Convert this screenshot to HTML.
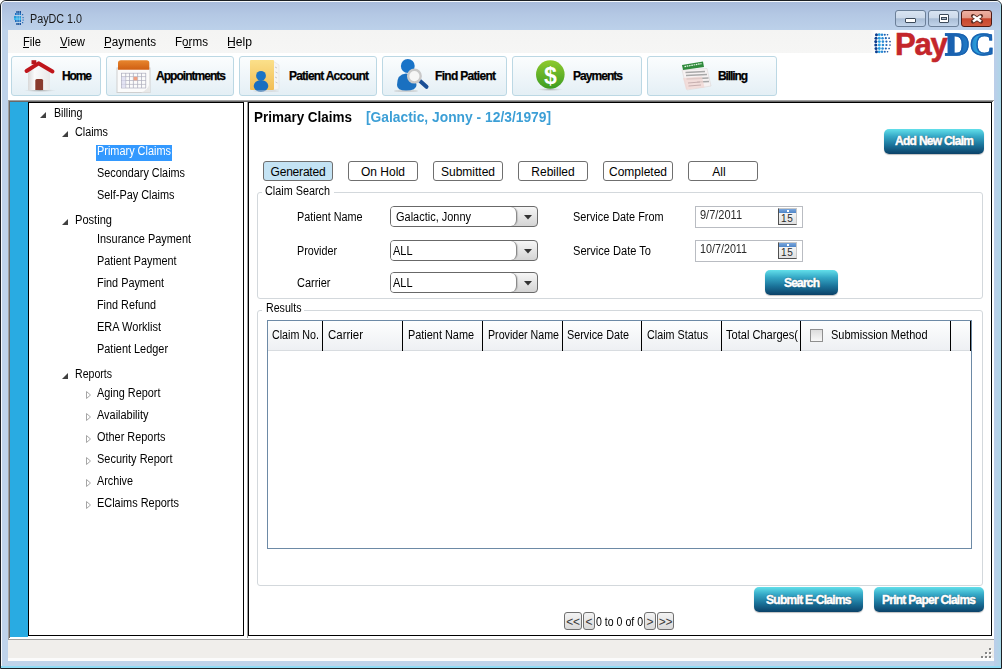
<!DOCTYPE html><html><head><meta charset="utf-8"><style>
html,body{margin:0;padding:0;width:1002px;height:669px;overflow:hidden;background:#fff}
div{box-sizing:border-box}
</style></head><body>
<div style="position:absolute;left:0px;top:0px;width:1002px;height:669px;background:#bfd3ea;border:1px solid #1b1f24;border-radius:6px 6px 0 0;"></div>
<div style="position:absolute;left:1px;top:1px;width:1000px;height:667px;border:1px solid rgba(255,255,255,0.85);border-right-color:#a6d6e6;border-bottom:none;border-radius:5px 5px 0 0;"></div>
<div style="position:absolute;left:994px;top:30px;width:6px;height:636px;background:linear-gradient(90deg,#bccde9,#b0d4e8);"></div>
<div style="position:absolute;left:2px;top:2px;width:998px;height:28px;background:linear-gradient(#a9bcdc,#b4c8e4 45%,#bcd1ea);border-radius:4px 4px 0 0;"></div>
<div style="position:absolute;left:1px;top:666px;width:1000px;height:2px;background:#8fdcf5;"></div>
<div style="position:absolute;left:8px;top:30px;width:986px;height:631px;background:#fff;"></div>
<div style="position:absolute;left:8px;top:30px;width:986px;height:23px;background:linear-gradient(#f4f4f3,#f6f6f5);"></div>
<svg style="position:absolute;left:14px;top:11px" width="10" height="14"><rect x="2" y="0" width="5" height="2" fill="#1a4f9a"/><rect x="1" y="2" width="6" height="2" fill="#1f6fc0"/><rect x="0" y="5" width="7" height="2" fill="#2a9ad8"/><rect x="0" y="7" width="7" height="2" fill="#3ab6ea"/><rect x="1" y="9" width="6" height="2" fill="#1f6fc0"/><rect x="2" y="12" width="5" height="2" fill="#1a4f9a"/><rect x="8" y="3" width="1.2" height="1.2" fill="#2a6fb8"/><rect x="8.5" y="6" width="1.2" height="1.2" fill="#2a6fb8"/><rect x="8.5" y="8.5" width="1.2" height="1.2" fill="#2a6fb8"/><rect x="8" y="11" width="1.2" height="1.2" fill="#2a6fb8"/><rect x="2.6" y="0" width="0.8" height="14" fill="#c0e4f4" opacity="0.7"/><rect x="4.8" y="0" width="0.8" height="14" fill="#c0e4f4" opacity="0.7"/></svg>
<div style="position:absolute;left:30px;top:13px;white-space:nowrap;font:normal 12px/12px 'Liberation Sans',sans-serif;color:#1a1a1a;letter-spacing:0.000px;transform:scaleX(0.8963);transform-origin:0 0;">PayDC 1.0</div>
<div style="position:absolute;left:895px;top:10px;width:31px;height:17px;background:linear-gradient(#d8e4f2 0%,#cddaea 45%,#a9bdd6 52%,#c2d4ea 100%);border:1px solid #6b7f98;border-radius:3px;"></div>
<div style="position:absolute;left:928px;top:10px;width:31px;height:17px;background:linear-gradient(#d8e4f2 0%,#cddaea 45%,#a9bdd6 52%,#c2d4ea 100%);border:1px solid #6b7f98;border-radius:3px;"></div>
<div style="position:absolute;left:961px;top:10px;width:31px;height:17px;background:linear-gradient(#eeb0a2 0%,#e39a88 45%,#c9462c 52%,#d05a3e 100%);border:1px solid #4e1a14;border-radius:3px;"></div>
<div style="position:absolute;left:905px;top:18px;width:11px;height:5px;background:#fff;border:1px solid #3c4a5a;border-radius:1px;"></div>
<div style="position:absolute;left:939px;top:14px;width:10px;height:9px;background:#fff;border:1px solid #3c4a5a;border-radius:1px;"></div>
<div style="position:absolute;left:941px;top:17px;width:6px;height:3px;background:#aab4c0;border:1px solid #3c4a5a;"></div>
<svg style="position:absolute;left:969px;top:12px" width="16" height="13"><path d="M4 4 L12 9.5 M12 4 L4 9.5" stroke="#5a2a20" stroke-width="4" stroke-linecap="round"/><path d="M4 4 L12 9.5 M12 4 L4 9.5" stroke="#fff" stroke-width="2.6"/></svg>
<div style="position:absolute;left:23px;top:36px;white-space:nowrap;font:normal 12px/12px 'Liberation Sans',sans-serif;color:#000;letter-spacing:0.000px;transform:scaleX(0.9305);transform-origin:0 0;">File</div>
<div style="position:absolute;left:23px;top:47px;width:6px;height:1px;background:#000;"></div>
<div style="position:absolute;left:60px;top:36px;white-space:nowrap;font:normal 12px/12px 'Liberation Sans',sans-serif;color:#000;letter-spacing:0.000px;transform:scaleX(0.9691);transform-origin:0 0;">View</div>
<div style="position:absolute;left:60px;top:47px;width:7px;height:1px;background:#000;"></div>
<div style="position:absolute;left:104px;top:36px;white-space:nowrap;font:normal 12px/12px 'Liberation Sans',sans-serif;color:#000;letter-spacing:0.000px;transform:scaleX(0.9748);transform-origin:0 0;">Payments</div>
<div style="position:absolute;left:104px;top:47px;width:7px;height:1px;background:#000;"></div>
<div style="position:absolute;left:175px;top:36px;white-space:nowrap;font:normal 12px/12px 'Liberation Sans',sans-serif;color:#000;letter-spacing:0.000px;transform:scaleX(0.9706);transform-origin:0 0;">Forms</div>
<div style="position:absolute;left:184px;top:47px;width:7px;height:1px;background:#000;"></div>
<div style="position:absolute;left:227px;top:36px;white-space:nowrap;font:normal 12px/12px 'Liberation Sans',sans-serif;color:#000;letter-spacing:0.000px;transform:scaleX(1.0127);transform-origin:0 0;">Help</div>
<div style="position:absolute;left:228px;top:47px;width:7px;height:1px;background:#000;"></div>
<div style="position:absolute;left:870px;top:30px;width:124px;height:24px;background:linear-gradient(90deg,rgba(255,255,255,0),#fff 6px);"></div>
<svg style="position:absolute;left:870px;top:30px" width="22" height="26" viewBox="0 0 22 26"><circle cx="6.46" cy="4.70" r="1.50" fill="#0c3d8e"/><circle cx="9.23" cy="4.70" r="1.40" fill="#2aa2e4"/><circle cx="12.00" cy="4.70" r="1.26" fill="#2b8ad4"/><circle cx="14.77" cy="4.70" r="1.06" fill="#1e64b6"/><circle cx="17.54" cy="4.70" r="0.82" fill="#1a4f9a"/><circle cx="6.04" cy="8.20" r="1.53" fill="#0c3d8e"/><circle cx="9.31" cy="8.20" r="1.43" fill="#2aa2e4"/><circle cx="12.57" cy="8.20" r="1.28" fill="#2b8ad4"/><circle cx="15.84" cy="8.20" r="1.09" fill="#1e64b6"/><circle cx="19.10" cy="8.20" r="0.84" fill="#1a4f9a"/><circle cx="5.80" cy="11.60" r="1.55" fill="#0c3d8e"/><circle cx="9.35" cy="11.60" r="1.45" fill="#2aa2e4"/><circle cx="12.90" cy="11.60" r="1.30" fill="#2b8ad4"/><circle cx="16.45" cy="11.60" r="1.10" fill="#1e64b6"/><circle cx="20.00" cy="11.60" r="0.85" fill="#1a4f9a"/><circle cx="5.80" cy="15.00" r="1.55" fill="#0c3d8e"/><circle cx="9.35" cy="15.00" r="1.45" fill="#2aa2e4"/><circle cx="12.90" cy="15.00" r="1.30" fill="#2b8ad4"/><circle cx="16.45" cy="15.00" r="1.10" fill="#1e64b6"/><circle cx="20.00" cy="15.00" r="0.85" fill="#1a4f9a"/><circle cx="6.04" cy="18.50" r="1.53" fill="#0c3d8e"/><circle cx="9.31" cy="18.50" r="1.43" fill="#2aa2e4"/><circle cx="12.57" cy="18.50" r="1.28" fill="#2b8ad4"/><circle cx="15.84" cy="18.50" r="1.09" fill="#1e64b6"/><circle cx="19.10" cy="18.50" r="0.84" fill="#1a4f9a"/><circle cx="6.46" cy="21.80" r="1.50" fill="#0c3d8e"/><circle cx="9.23" cy="21.80" r="1.40" fill="#2aa2e4"/><circle cx="12.00" cy="21.80" r="1.26" fill="#2b8ad4"/><circle cx="14.77" cy="21.80" r="1.06" fill="#1e64b6"/><circle cx="17.54" cy="21.80" r="0.82" fill="#1a4f9a"/></svg>
<div style="position:absolute;left:895px;top:28px;font:bold 31px/34px 'Liberation Sans',sans-serif;color:#c4262b;-webkit-text-stroke:0.6px #c4262b;letter-spacing:-1.2px">Pay</div>
<div style="position:absolute;left:945px;top:28px;font:bold 31px/34px 'Liberation Serif',serif;transform:scaleX(1.1);transform-origin:0 0;background:linear-gradient(90deg,#1858a8,#1f78c4 45%,#2aa0dc 65%,#1a5cb0);-webkit-background-clip:text;background-clip:text;-webkit-text-fill-color:transparent;-webkit-text-stroke:1.3px #1a62b0;">DC</div>
<div style="position:absolute;left:11px;top:56px;width:90px;height:40px;background:linear-gradient(#fbfdfe,#e4eff5);border:1px solid #bcd8e4;border-radius:3px;"></div>
<div style="position:absolute;left:62px;top:70px;white-space:nowrap;font:bold 12px/12px 'Liberation Sans',sans-serif;color:#000;letter-spacing:-1.115px;-webkit-text-stroke:0.25px #000;">Home</div>
<div style="position:absolute;left:106px;top:56px;width:128px;height:40px;background:linear-gradient(#fbfdfe,#e4eff5);border:1px solid #bcd8e4;border-radius:3px;"></div>
<div style="position:absolute;left:156px;top:70px;white-space:nowrap;font:bold 12px/12px 'Liberation Sans',sans-serif;color:#000;letter-spacing:-0.969px;-webkit-text-stroke:0.25px #000;">Appointments</div>
<div style="position:absolute;left:239px;top:56px;width:138px;height:40px;background:linear-gradient(#fbfdfe,#e4eff5);border:1px solid #bcd8e4;border-radius:3px;"></div>
<div style="position:absolute;left:289px;top:70px;white-space:nowrap;font:bold 12px/12px 'Liberation Sans',sans-serif;color:#000;letter-spacing:-0.778px;-webkit-text-stroke:0.25px #000;">Patient Account</div>
<div style="position:absolute;left:382px;top:56px;width:125px;height:40px;background:linear-gradient(#fbfdfe,#e4eff5);border:1px solid #bcd8e4;border-radius:3px;"></div>
<div style="position:absolute;left:435px;top:70px;white-space:nowrap;font:bold 12px/12px 'Liberation Sans',sans-serif;color:#000;letter-spacing:-0.695px;-webkit-text-stroke:0.25px #000;">Find Patient</div>
<div style="position:absolute;left:512px;top:56px;width:130px;height:40px;background:linear-gradient(#fbfdfe,#e4eff5);border:1px solid #bcd8e4;border-radius:3px;"></div>
<div style="position:absolute;left:573px;top:70px;white-space:nowrap;font:bold 12px/12px 'Liberation Sans',sans-serif;color:#000;letter-spacing:-0.955px;-webkit-text-stroke:0.25px #000;">Payments</div>
<div style="position:absolute;left:647px;top:56px;width:130px;height:40px;background:linear-gradient(#fbfdfe,#e4eff5);border:1px solid #bcd8e4;border-radius:3px;"></div>
<div style="position:absolute;left:718px;top:70px;white-space:nowrap;font:bold 12px/12px 'Liberation Sans',sans-serif;color:#000;letter-spacing:-1.107px;-webkit-text-stroke:0.25px #000;">Billing</div>
<svg style="position:absolute;left:20px;top:56px" width="40" height="40" viewBox="0 0 40 40"><defs><linearGradient id="hw" x1="0" x2="1"><stop offset="0" stop-color="#d8d8d8"/><stop offset="0.3" stop-color="#fbfbfb"/><stop offset="1" stop-color="#e9e9e9"/></linearGradient>
<radialGradient id="hs"><stop offset="0" stop-color="#9a9a9a" stop-opacity="0.8"/><stop offset="1" stop-color="#bbb" stop-opacity="0"/></radialGradient></defs>
<ellipse cx="20" cy="34.5" rx="16" ry="1.6" fill="url(#hs)"/>
<path d="M8 14 L18.5 8 L30 14 L30 34 L8 34 Z" fill="url(#hw)"/>
<path d="M15.3 34 L15.3 24.5 Q15.3 23 16.8 23 L21.6 23 Q23.1 23 23.1 24.5 L23.1 34 Z" fill="#8a3a2c"/>
<rect x="11.5" y="4.2" width="4.8" height="4" fill="#b5161b"/>
<path d="M6.5 15 L18.5 7.3 L32.5 15.5" fill="none" stroke="#bf161c" stroke-width="3.9" stroke-linecap="round" stroke-linejoin="round"/></svg>
<svg style="position:absolute;left:114px;top:56px" width="40" height="40" viewBox="0 0 40 40"><defs><linearGradient id="co" x1="0" y1="0" x2="0" y2="1"><stop offset="0" stop-color="#e8862e"/><stop offset="1" stop-color="#cf5e12"/></linearGradient></defs>
<rect x="3" y="12" width="33" height="24.5" fill="#fbfbfb" stroke="#cfcfcf" stroke-width="1"/>
<path d="M4 13.8 L4 7 Q4 4.2 7 4.2 L32.5 4.2 Q35.3 4.2 35.3 7 L35.3 13.8 Z" fill="url(#co)"/><line x1="7.5" y1="17" x2="7.5" y2="32" stroke="#a8a8b8" stroke-width="0.7"/><line x1="11.7" y1="17" x2="11.7" y2="32" stroke="#a8a8b8" stroke-width="0.7"/><line x1="15.5" y1="17" x2="15.5" y2="32" stroke="#a8a8b8" stroke-width="0.7"/><line x1="19.4" y1="17" x2="19.4" y2="32" stroke="#a8a8b8" stroke-width="0.7"/><line x1="23.6" y1="17" x2="23.6" y2="32" stroke="#a8a8b8" stroke-width="0.7"/><line x1="27.5" y1="17" x2="27.5" y2="32" stroke="#a8a8b8" stroke-width="0.7"/><line x1="31.7" y1="17" x2="31.7" y2="32" stroke="#a8a8b8" stroke-width="0.7"/><line x1="7" y1="17.3" x2="32" y2="17.3" stroke="#b0b0c0" stroke-width="0.7"/><line x1="7" y1="20.6" x2="32" y2="20.6" stroke="#b0b0c0" stroke-width="0.7"/><line x1="7" y1="24.5" x2="32" y2="24.5" stroke="#b0b0c0" stroke-width="0.7"/><line x1="7" y1="28.4" x2="32" y2="28.4" stroke="#b0b0c0" stroke-width="0.7"/><line x1="7" y1="32" x2="32" y2="32" stroke="#b0b0c0" stroke-width="0.7"/><rect x="19.6" y="20.8" width="3.8" height="3.5" fill="#f0a080"/><rect x="7.8" y="20.8" width="3.7" height="11" fill="#d8d8f0" opacity="0.7"/><path d="M36 27 L36 36.5 L27 36.5 Q33 35 36 27 Z" fill="#e8e8e8"/></svg>
<svg style="position:absolute;left:244px;top:56px" width="40" height="40" viewBox="0 0 40 40"><defs><linearGradient id="fy" x1="0" y1="0" x2="0" y2="1"><stop offset="0" stop-color="#fbe08a"/><stop offset="1" stop-color="#f2bd55"/></linearGradient></defs>
<path d="M29 5 L35 9 L35 33 L29 34 Z" fill="#f4f4f4" stroke="#e0e0e0" stroke-width="0.6"/>
<rect x="6" y="4" width="24" height="30" rx="1" fill="url(#fy)"/>
<ellipse cx="17" cy="30" rx="7.3" ry="6" fill="#1a6ec0"/>
<circle cx="17" cy="19.8" r="4.9" fill="#1a73c6"/>
<path d="M31 11 L33 12 M31.5 16 L33.5 17 M31 21 L33 22 M31.5 26 L33.5 27" stroke="#c8c8c8" stroke-width="1"/>
<ellipse cx="22" cy="35" rx="13" ry="1" fill="#ccc" opacity="0.5"/></svg>
<svg style="position:absolute;left:392px;top:54px" width="40" height="40" viewBox="0 0 40 40"><ellipse cx="14" cy="37" rx="12" ry="1" fill="#bbb" opacity="0.6"/>
<circle cx="15.8" cy="12" r="6.9" fill="#1a74c8"/>
<path d="M5 31 Q5 20 14 19.5 Q24 20 24.5 31 Q24.5 36.5 14 36.5 Q5 36.5 5 31 Z" fill="#1a70c0"/>
<line x1="27.5" y1="26.5" x2="34.5" y2="32.8" stroke="#1b4f96" stroke-width="4" stroke-linecap="round"/>
<circle cx="22.4" cy="22.1" r="6.3" fill="#f6f6f6" stroke="#c9c9c9" stroke-width="2.4"/></svg>
<svg style="position:absolute;left:530px;top:56px" width="40" height="40" viewBox="0 0 40 40"><defs><linearGradient id="pg" x1="0" y1="0" x2="0" y2="1"><stop offset="0" stop-color="#8fca2e"/><stop offset="1" stop-color="#3c9c22"/></linearGradient>
<radialGradient id="ps"><stop offset="0" stop-color="#888" stop-opacity="0.6"/><stop offset="1" stop-color="#aaa" stop-opacity="0"/></radialGradient></defs>
<ellipse cx="20" cy="33.5" rx="13" ry="1.6" fill="url(#ps)"/>
<circle cx="20.3" cy="18.5" r="14.3" fill="url(#pg)"/>
<text x="20.3" y="27.5" text-anchor="middle" font-family="Liberation Sans" font-weight="bold" font-size="23" fill="#fff">$</text></svg>
<svg style="position:absolute;left:676px;top:56px" width="40" height="40" viewBox="0 0 40 40"><path d="M6 14 L31 12.5 L35 30 L11 34 Z" fill="#f6f2f2" stroke="#dcd6d6" stroke-width="0.6"/>
<path d="M9.5 16.5 L29 15.5 M10 19.5 L31 18.5 M10.5 23 L32.5 22 M21 26 L33 25.5" stroke="#a9a9a9" stroke-width="1.3"/>
<path d="M7 22 L26 20.5 L28.5 31.5 L10 33.5 Z" fill="#f0d6d2" opacity="0.75"/>
<path d="M12 27 L24 26 M12.5 30 L25 29" stroke="#c8b0b0" stroke-width="1"/>
<path d="M6 9 L27 5.4 L28 11 L7 14 Z" fill="#2f8a3c"/>
<path d="M8.5 10.6 L25.5 7.6" stroke="#e8f8e8" stroke-width="1.2" stroke-dasharray="1.6 0.7"/></svg>
<div style="position:absolute;left:8px;top:100px;width:986px;height:1px;background:#a0a0a0;"></div>
<div style="position:absolute;left:9px;top:101px;width:984px;height:1px;background:#696969;"></div>
<div style="position:absolute;left:10px;top:102px;width:18px;height:535px;background:#29abe2;"></div>
<div style="position:absolute;left:8px;top:100px;width:1px;height:539px;background:#a0a0a0;"></div>
<div style="position:absolute;left:9px;top:101px;width:1px;height:537px;background:#696969;"></div>
<div style="position:absolute;left:28px;top:102px;width:216px;height:534px;background:#fff;border:1px solid #000;"></div>
<div style="position:absolute;left:248px;top:102px;width:744px;height:534px;background:#fff;border:1px solid #000;"></div>
<div style="position:absolute;left:247px;top:102px;width:1px;height:536px;background:#a0a0a0;"></div>
<div style="position:absolute;left:8px;top:639px;width:986px;height:1px;background:#a0a0a0;"></div>
<div style="position:absolute;left:8px;top:640px;width:986px;height:18px;background:#f0eeeb;"></div>
<div style="position:absolute;left:8px;top:658px;width:986px;height:3px;background:#fbfbfb;"></div>
<div style="position:absolute;left:990px;top:649px;width:2px;height:2px;background:#fff;"></div>
<div style="position:absolute;left:989px;top:648px;width:2px;height:2px;background:#858585;"></div>
<div style="position:absolute;left:986px;top:653px;width:2px;height:2px;background:#fff;"></div>
<div style="position:absolute;left:985px;top:652px;width:2px;height:2px;background:#858585;"></div>
<div style="position:absolute;left:990px;top:653px;width:2px;height:2px;background:#fff;"></div>
<div style="position:absolute;left:989px;top:652px;width:2px;height:2px;background:#858585;"></div>
<div style="position:absolute;left:982px;top:657px;width:2px;height:2px;background:#fff;"></div>
<div style="position:absolute;left:981px;top:656px;width:2px;height:2px;background:#858585;"></div>
<div style="position:absolute;left:986px;top:657px;width:2px;height:2px;background:#fff;"></div>
<div style="position:absolute;left:985px;top:656px;width:2px;height:2px;background:#858585;"></div>
<div style="position:absolute;left:990px;top:657px;width:2px;height:2px;background:#fff;"></div>
<div style="position:absolute;left:989px;top:656px;width:2px;height:2px;background:#858585;"></div>
<svg style="position:absolute;left:39px;top:112px" width="8" height="7"><path d="M7 0 L7 6 L1 6 Z" fill="#404040"/></svg>
<div style="position:absolute;left:54px;top:107px;white-space:nowrap;font:normal 12px/12px 'Liberation Sans',sans-serif;color:#000;letter-spacing:0.000px;transform:scaleX(0.8898);transform-origin:0 0;">Billing</div>
<svg style="position:absolute;left:61px;top:131px" width="8" height="7"><path d="M7 0 L7 6 L1 6 Z" fill="#404040"/></svg>
<div style="position:absolute;left:75px;top:126px;white-space:nowrap;font:normal 12px/12px 'Liberation Sans',sans-serif;color:#000;letter-spacing:0.000px;transform:scaleX(0.8995);transform-origin:0 0;">Claims</div>
<div style="position:absolute;left:96px;top:145px;width:76px;height:16px;background:#3399ff;"></div>
<div style="position:absolute;left:97px;top:145px;white-space:nowrap;font:normal 12px/12px 'Liberation Sans',sans-serif;color:#fff;letter-spacing:0.000px;transform:scaleX(0.9095);transform-origin:0 0;">Primary Claims</div>
<div style="position:absolute;left:97px;top:167px;white-space:nowrap;font:normal 12px/12px 'Liberation Sans',sans-serif;color:#000;letter-spacing:0.000px;transform:scaleX(0.9037);transform-origin:0 0;">Secondary Claims</div>
<div style="position:absolute;left:97px;top:189px;white-space:nowrap;font:normal 12px/12px 'Liberation Sans',sans-serif;color:#000;letter-spacing:0.000px;transform:scaleX(0.9079);transform-origin:0 0;">Self-Pay Claims</div>
<svg style="position:absolute;left:61px;top:219px" width="8" height="7"><path d="M7 0 L7 6 L1 6 Z" fill="#404040"/></svg>
<div style="position:absolute;left:75px;top:214px;white-space:nowrap;font:normal 12px/12px 'Liberation Sans',sans-serif;color:#000;letter-spacing:0.000px;transform:scaleX(0.9246);transform-origin:0 0;">Posting</div>
<div style="position:absolute;left:97px;top:233px;white-space:nowrap;font:normal 12px/12px 'Liberation Sans',sans-serif;color:#000;letter-spacing:0.000px;transform:scaleX(0.9094);transform-origin:0 0;">Insurance Payment</div>
<div style="position:absolute;left:97px;top:255px;white-space:nowrap;font:normal 12px/12px 'Liberation Sans',sans-serif;color:#000;letter-spacing:0.000px;transform:scaleX(0.9032);transform-origin:0 0;">Patient Payment</div>
<div style="position:absolute;left:97px;top:277px;white-space:nowrap;font:normal 12px/12px 'Liberation Sans',sans-serif;color:#000;letter-spacing:0.000px;transform:scaleX(0.9052);transform-origin:0 0;">Find Payment</div>
<div style="position:absolute;left:97px;top:299px;white-space:nowrap;font:normal 12px/12px 'Liberation Sans',sans-serif;color:#000;letter-spacing:0.000px;transform:scaleX(0.9027);transform-origin:0 0;">Find Refund</div>
<div style="position:absolute;left:97px;top:321px;white-space:nowrap;font:normal 12px/12px 'Liberation Sans',sans-serif;color:#000;letter-spacing:0.000px;transform:scaleX(0.9169);transform-origin:0 0;">ERA Worklist</div>
<div style="position:absolute;left:97px;top:343px;white-space:nowrap;font:normal 12px/12px 'Liberation Sans',sans-serif;color:#000;letter-spacing:0.000px;transform:scaleX(0.9099);transform-origin:0 0;">Patient Ledger</div>
<svg style="position:absolute;left:61px;top:373px" width="8" height="7"><path d="M7 0 L7 6 L1 6 Z" fill="#404040"/></svg>
<div style="position:absolute;left:75px;top:368px;white-space:nowrap;font:normal 12px/12px 'Liberation Sans',sans-serif;color:#000;letter-spacing:0.000px;transform:scaleX(0.8806);transform-origin:0 0;">Reports</div>
<svg style="position:absolute;left:85px;top:391px" width="8" height="9"><path d="M1.5 0.5 L5.5 4 L1.5 7.5 Z" fill="#fff" stroke="#a6a6a6"/></svg>
<div style="position:absolute;left:97px;top:387px;white-space:nowrap;font:normal 12px/12px 'Liberation Sans',sans-serif;color:#000;letter-spacing:0.000px;transform:scaleX(0.9067);transform-origin:0 0;">Aging Report</div>
<svg style="position:absolute;left:85px;top:413px" width="8" height="9"><path d="M1.5 0.5 L5.5 4 L1.5 7.5 Z" fill="#fff" stroke="#a6a6a6"/></svg>
<div style="position:absolute;left:97px;top:409px;white-space:nowrap;font:normal 12px/12px 'Liberation Sans',sans-serif;color:#000;letter-spacing:0.000px;transform:scaleX(0.9118);transform-origin:0 0;">Availability</div>
<svg style="position:absolute;left:85px;top:435px" width="8" height="9"><path d="M1.5 0.5 L5.5 4 L1.5 7.5 Z" fill="#fff" stroke="#a6a6a6"/></svg>
<div style="position:absolute;left:97px;top:431px;white-space:nowrap;font:normal 12px/12px 'Liberation Sans',sans-serif;color:#000;letter-spacing:0.000px;transform:scaleX(0.9092);transform-origin:0 0;">Other Reports</div>
<svg style="position:absolute;left:85px;top:457px" width="8" height="9"><path d="M1.5 0.5 L5.5 4 L1.5 7.5 Z" fill="#fff" stroke="#a6a6a6"/></svg>
<div style="position:absolute;left:97px;top:453px;white-space:nowrap;font:normal 12px/12px 'Liberation Sans',sans-serif;color:#000;letter-spacing:0.000px;transform:scaleX(0.9131);transform-origin:0 0;">Security Report</div>
<svg style="position:absolute;left:85px;top:479px" width="8" height="9"><path d="M1.5 0.5 L5.5 4 L1.5 7.5 Z" fill="#fff" stroke="#a6a6a6"/></svg>
<div style="position:absolute;left:97px;top:475px;white-space:nowrap;font:normal 12px/12px 'Liberation Sans',sans-serif;color:#000;letter-spacing:0.000px;transform:scaleX(0.8996);transform-origin:0 0;">Archive</div>
<svg style="position:absolute;left:85px;top:501px" width="8" height="9"><path d="M1.5 0.5 L5.5 4 L1.5 7.5 Z" fill="#fff" stroke="#a6a6a6"/></svg>
<div style="position:absolute;left:97px;top:497px;white-space:nowrap;font:normal 12px/12px 'Liberation Sans',sans-serif;color:#000;letter-spacing:0.000px;transform:scaleX(0.9108);transform-origin:0 0;">EClaims Reports</div>
<div style="position:absolute;left:254px;top:110px;white-space:nowrap;font:bold 14px/14px 'Liberation Sans',sans-serif;color:#000;letter-spacing:0.000px;transform:scaleX(0.9612);transform-origin:0 0;">Primary Claims</div>
<div style="position:absolute;left:366px;top:110px;white-space:nowrap;font:bold 14px/14px 'Liberation Sans',sans-serif;color:#3c9fd6;letter-spacing:0.000px;transform:scaleX(0.9870);transform-origin:0 0;">[Galactic, Jonny - 12/3/1979]</div>
<div style="position:absolute;left:884px;top:129px;width:100px;height:25px;background:linear-gradient(#62dfea 0%,#35a8c6 30%,#1a7299 65%,#0b4168 100%);border-radius:5px;box-shadow:0 1px 1px rgba(0,0,0,0.25);"></div>
<div style="position:absolute;left:895px;top:135px;white-space:nowrap;font:bold 12px/12px 'Liberation Sans',sans-serif;color:#fff;letter-spacing:-0.694px;text-shadow:0 0 1px #0a3550,0 0 1px #0a3550;-webkit-text-stroke:0.5px #fff;">Add New Claim</div>
<div style="position:absolute;left:263px;top:161px;width:70px;height:20px;background:#c4e3f4;border:1px solid #6f6f6f;border-radius:3px;"></div>
<div style="position:absolute;left:263px;top:166px;width:70px;text-align:center;font:12px/12px 'Liberation Sans',sans-serif;letter-spacing:-0.2px;color:#000">Generated</div>
<div style="position:absolute;left:348px;top:161px;width:70px;height:20px;background:#fff;border:1px solid #6f6f6f;border-radius:3px;"></div>
<div style="position:absolute;left:348px;top:166px;width:70px;text-align:center;font:12px/12px 'Liberation Sans',sans-serif;letter-spacing:0px;color:#000">On Hold</div>
<div style="position:absolute;left:433px;top:161px;width:70px;height:20px;background:#fff;border:1px solid #6f6f6f;border-radius:3px;"></div>
<div style="position:absolute;left:433px;top:166px;width:70px;text-align:center;font:12px/12px 'Liberation Sans',sans-serif;letter-spacing:0px;color:#000">Submitted</div>
<div style="position:absolute;left:518px;top:161px;width:70px;height:20px;background:#fff;border:1px solid #6f6f6f;border-radius:3px;"></div>
<div style="position:absolute;left:518px;top:166px;width:70px;text-align:center;font:12px/12px 'Liberation Sans',sans-serif;letter-spacing:0px;color:#000">Rebilled</div>
<div style="position:absolute;left:603px;top:161px;width:70px;height:20px;background:#fff;border:1px solid #6f6f6f;border-radius:3px;"></div>
<div style="position:absolute;left:603px;top:166px;width:70px;text-align:center;font:12px/12px 'Liberation Sans',sans-serif;letter-spacing:0px;color:#000">Completed</div>
<div style="position:absolute;left:688px;top:161px;width:70px;height:20px;background:#fff;border:1px solid #6f6f6f;border-radius:3px;"></div>
<div style="position:absolute;left:684px;top:166px;width:70px;text-align:center;font:12px/12px 'Liberation Sans',sans-serif;letter-spacing:0px;color:#000">All</div>
<div style="position:absolute;left:257px;top:192px;width:726px;height:107px;border:1px solid #d3d8dc;border-radius:3px;"></div>
<div style="position:absolute;left:262px;top:186px;width:72px;height:12px;background:#fff;"></div>
<div style="position:absolute;left:265px;top:185px;white-space:nowrap;font:normal 12px/12px 'Liberation Sans',sans-serif;color:#000;letter-spacing:0.000px;transform:scaleX(0.9024);transform-origin:0 0;">Claim Search</div>
<div style="position:absolute;left:257px;top:310px;width:726px;height:276px;border:1px solid #d3d8dc;border-radius:3px;"></div>
<div style="position:absolute;left:262px;top:303px;width:42px;height:12px;background:#fff;"></div>
<div style="position:absolute;left:266px;top:302px;white-space:nowrap;font:normal 12px/12px 'Liberation Sans',sans-serif;color:#000;letter-spacing:0.000px;transform:scaleX(0.8872);transform-origin:0 0;">Results</div>
<div style="position:absolute;left:297px;top:211px;white-space:nowrap;font:normal 12px/12px 'Liberation Sans',sans-serif;color:#000;letter-spacing:0.000px;transform:scaleX(0.9011);transform-origin:0 0;">Patient Name</div>
<div style="position:absolute;left:297px;top:245px;white-space:nowrap;font:normal 12px/12px 'Liberation Sans',sans-serif;color:#000;letter-spacing:0.000px;transform:scaleX(0.8951);transform-origin:0 0;">Provider</div>
<div style="position:absolute;left:297px;top:277px;white-space:nowrap;font:normal 12px/12px 'Liberation Sans',sans-serif;color:#000;letter-spacing:0.000px;transform:scaleX(0.9131);transform-origin:0 0;">Carrier</div>
<div style="position:absolute;left:573px;top:211px;white-space:nowrap;font:normal 12px/12px 'Liberation Sans',sans-serif;color:#000;letter-spacing:0.000px;transform:scaleX(0.9049);transform-origin:0 0;">Service Date From</div>
<div style="position:absolute;left:573px;top:245px;white-space:nowrap;font:normal 12px/12px 'Liberation Sans',sans-serif;color:#000;letter-spacing:0.000px;transform:scaleX(0.9234);transform-origin:0 0;">Service Date To</div>
<div style="position:absolute;left:390px;top:206px;width:148px;height:21px;background:linear-gradient(#f6f6f6,#d4d4d4);border:1px solid #6a6a6a;border-radius:4px;"></div>
<div style="position:absolute;left:391px;top:207px;width:126px;height:19px;background:#fff;border-right:1px solid #8a8a8a;border-radius:3px 6px 6px 3px;box-shadow:1px 0 1px rgba(0,0,0,0.15);"></div>
<svg style="position:absolute;left:524px;top:215px" width="9" height="5"><path d="M0 0 L8 0 L4 4.5 Z" fill="#333"/></svg>
<div style="position:absolute;left:396px;top:211px;white-space:nowrap;font:normal 12px/12px 'Liberation Sans',sans-serif;color:#000;letter-spacing:0.000px;transform:scaleX(0.9145);transform-origin:0 0;">Galactic, Jonny</div>
<div style="position:absolute;left:390px;top:240px;width:148px;height:21px;background:linear-gradient(#f6f6f6,#d4d4d4);border:1px solid #6a6a6a;border-radius:4px;"></div>
<div style="position:absolute;left:391px;top:241px;width:126px;height:19px;background:#fff;border-right:1px solid #8a8a8a;border-radius:3px 6px 6px 3px;box-shadow:1px 0 1px rgba(0,0,0,0.15);"></div>
<svg style="position:absolute;left:524px;top:249px" width="9" height="5"><path d="M0 0 L8 0 L4 4.5 Z" fill="#333"/></svg>
<div style="position:absolute;left:393px;top:245px;white-space:nowrap;font:normal 12px/12px 'Liberation Sans',sans-serif;color:#000;letter-spacing:0.000px;transform:scaleX(0.9136);transform-origin:0 0;">ALL</div>
<div style="position:absolute;left:390px;top:272px;width:148px;height:21px;background:linear-gradient(#f6f6f6,#d4d4d4);border:1px solid #6a6a6a;border-radius:4px;"></div>
<div style="position:absolute;left:391px;top:273px;width:126px;height:19px;background:#fff;border-right:1px solid #8a8a8a;border-radius:3px 6px 6px 3px;box-shadow:1px 0 1px rgba(0,0,0,0.15);"></div>
<svg style="position:absolute;left:524px;top:281px" width="9" height="5"><path d="M0 0 L8 0 L4 4.5 Z" fill="#333"/></svg>
<div style="position:absolute;left:393px;top:277px;white-space:nowrap;font:normal 12px/12px 'Liberation Sans',sans-serif;color:#000;letter-spacing:0.000px;transform:scaleX(0.9136);transform-origin:0 0;">ALL</div>
<div style="position:absolute;left:695px;top:206px;width:108px;height:22px;background:#fff;border:1px solid #b9bcc2;"></div>
<div style="position:absolute;left:700px;top:209px;white-space:nowrap;font:normal 12px/12px 'Liberation Sans',sans-serif;color:#2a2a2a;letter-spacing:0.000px;transform:scaleX(0.9171);transform-origin:0 0;">9/7/2011</div>
<div style="position:absolute;left:778px;top:208px;width:19px;height:17px;background:linear-gradient(#fcfcfc,#e0e0e0);border:1px solid #c8c8c8;border-left:1px solid #505050;border-bottom:1px solid #505050;"></div>
<div style="position:absolute;left:779px;top:209px;width:17px;height:4px;background:linear-gradient(#7aa6dc,#4f86c8);"></div>
<div style="position:absolute;left:787px;top:210px;width:2px;height:2px;background:#fff;"></div>
<div style="position:absolute;left:781px;top:214px;font:normal 10px/10px 'Liberation Sans',sans-serif;color:#2a2a2a;letter-spacing:0.6px">15</div>
<div style="position:absolute;left:695px;top:240px;width:108px;height:22px;background:#fff;border:1px solid #b9bcc2;"></div>
<div style="position:absolute;left:700px;top:243px;white-space:nowrap;font:normal 12px/12px 'Liberation Sans',sans-serif;color:#2a2a2a;letter-spacing:0.000px;transform:scaleX(0.8958);transform-origin:0 0;">10/7/2011</div>
<div style="position:absolute;left:778px;top:242px;width:19px;height:17px;background:linear-gradient(#fcfcfc,#e0e0e0);border:1px solid #c8c8c8;border-left:1px solid #505050;border-bottom:1px solid #505050;"></div>
<div style="position:absolute;left:779px;top:243px;width:17px;height:4px;background:linear-gradient(#7aa6dc,#4f86c8);"></div>
<div style="position:absolute;left:787px;top:244px;width:2px;height:2px;background:#fff;"></div>
<div style="position:absolute;left:781px;top:248px;font:normal 10px/10px 'Liberation Sans',sans-serif;color:#2a2a2a;letter-spacing:0.6px">15</div>
<div style="position:absolute;left:765px;top:270px;width:73px;height:25px;background:linear-gradient(#62dfea 0%,#35a8c6 30%,#1a7299 65%,#0b4168 100%);border-radius:5px;box-shadow:0 1px 1px rgba(0,0,0,0.25);"></div>
<div style="position:absolute;left:784px;top:277px;white-space:nowrap;font:bold 12px/12px 'Liberation Sans',sans-serif;color:#fff;letter-spacing:-0.803px;text-shadow:0 0 1px #0a3550,0 0 1px #0a3550;-webkit-text-stroke:0.5px #fff;">Search</div>
<div style="position:absolute;left:267px;top:320px;width:705px;height:229px;background:#fff;border:1px solid #6d8aa6;"></div>
<div style="position:absolute;left:268px;top:321px;width:703px;height:30px;background:linear-gradient(#fdfefe,#eef0f3);border-bottom:1px solid #d8dce0;"></div>
<div style="position:absolute;left:322px;top:321px;width:1px;height:30px;background:#000;"></div>
<div style="position:absolute;left:402px;top:321px;width:1px;height:30px;background:#000;"></div>
<div style="position:absolute;left:482px;top:321px;width:1px;height:30px;background:#000;"></div>
<div style="position:absolute;left:562px;top:321px;width:1px;height:30px;background:#000;"></div>
<div style="position:absolute;left:641px;top:321px;width:1px;height:30px;background:#000;"></div>
<div style="position:absolute;left:721px;top:321px;width:1px;height:30px;background:#000;"></div>
<div style="position:absolute;left:800px;top:321px;width:1px;height:30px;background:#000;"></div>
<div style="position:absolute;left:950px;top:321px;width:1px;height:30px;background:#000;"></div>
<div style="position:absolute;left:970px;top:321px;width:1px;height:30px;background:#000;"></div>
<div style="position:absolute;left:272px;top:329px;white-space:nowrap;font:normal 12px/12px 'Liberation Sans',sans-serif;color:#000;letter-spacing:0.000px;transform:scaleX(0.8921);transform-origin:0 0;">Claim No.</div>
<div style="position:absolute;left:328px;top:329px;white-space:nowrap;font:normal 12px/12px 'Liberation Sans',sans-serif;color:#000;letter-spacing:0.000px;transform:scaleX(0.9540);transform-origin:0 0;">Carrier</div>
<div style="position:absolute;left:408px;top:329px;white-space:nowrap;font:normal 12px/12px 'Liberation Sans',sans-serif;color:#000;letter-spacing:0.000px;transform:scaleX(0.9080);transform-origin:0 0;">Patient Name</div>
<div style="position:absolute;left:488px;top:329px;white-space:nowrap;font:normal 12px/12px 'Liberation Sans',sans-serif;color:#000;letter-spacing:0.000px;transform:scaleX(0.8872);transform-origin:0 0;">Provider Name</div>
<div style="position:absolute;left:567px;top:329px;white-space:nowrap;font:normal 12px/12px 'Liberation Sans',sans-serif;color:#000;letter-spacing:0.000px;transform:scaleX(0.9026);transform-origin:0 0;">Service Date</div>
<div style="position:absolute;left:647px;top:329px;white-space:nowrap;font:normal 12px/12px 'Liberation Sans',sans-serif;color:#000;letter-spacing:0.000px;transform:scaleX(0.8969);transform-origin:0 0;">Claim Status</div>
<div style="position:absolute;left:726px;top:329px;white-space:nowrap;font:normal 12px/12px 'Liberation Sans',sans-serif;color:#000;letter-spacing:0.000px;transform:scaleX(0.9227);transform-origin:0 0;">Total Charges(</div>
<div style="position:absolute;left:831px;top:329px;white-space:nowrap;font:normal 12px/12px 'Liberation Sans',sans-serif;color:#000;letter-spacing:0.000px;transform:scaleX(0.9158);transform-origin:0 0;">Submission Method</div>
<div style="position:absolute;left:810px;top:329px;width:13px;height:13px;background:linear-gradient(#dcdcdc,#f8f8f8);border:1px solid #8f8f8f;"></div>
<div style="position:absolute;left:754px;top:587px;width:109px;height:25px;background:linear-gradient(#62dfea 0%,#35a8c6 30%,#1a7299 65%,#0b4168 100%);border-radius:5px;box-shadow:0 1px 1px rgba(0,0,0,0.25);"></div>
<div style="position:absolute;left:766px;top:594px;white-space:nowrap;font:bold 12px/12px 'Liberation Sans',sans-serif;color:#fff;letter-spacing:-0.702px;text-shadow:0 0 1px #0a3550,0 0 1px #0a3550;-webkit-text-stroke:0.5px #fff;">Submit E-Claims</div>
<div style="position:absolute;left:874px;top:587px;width:110px;height:25px;background:linear-gradient(#62dfea 0%,#35a8c6 30%,#1a7299 65%,#0b4168 100%);border-radius:5px;box-shadow:0 1px 1px rgba(0,0,0,0.25);"></div>
<div style="position:absolute;left:882px;top:594px;white-space:nowrap;font:bold 12px/12px 'Liberation Sans',sans-serif;color:#fff;letter-spacing:-0.745px;text-shadow:0 0 1px #0a3550,0 0 1px #0a3550;-webkit-text-stroke:0.5px #fff;">Print Paper Claims</div>
<div style="position:absolute;left:564px;top:612px;width:18px;height:18px;background:linear-gradient(#f3f3f3,#dadada);border:1px solid #707070;border-radius:3px;"></div>
<div style="position:absolute;left:564px;top:616px;width:18px;text-align:center;font:12px/12px 'Liberation Sans',sans-serif;color:#3a3a3a;letter-spacing:-0.2px">&lt;&lt;</div>
<div style="position:absolute;left:583px;top:612px;width:12px;height:18px;background:linear-gradient(#f3f3f3,#dadada);border:1px solid #707070;border-radius:3px;"></div>
<div style="position:absolute;left:583px;top:616px;width:12px;text-align:center;font:12px/12px 'Liberation Sans',sans-serif;color:#3a3a3a;letter-spacing:-0.2px">&lt;</div>
<div style="position:absolute;left:644px;top:612px;width:12px;height:18px;background:linear-gradient(#f3f3f3,#dadada);border:1px solid #707070;border-radius:3px;"></div>
<div style="position:absolute;left:644px;top:616px;width:12px;text-align:center;font:12px/12px 'Liberation Sans',sans-serif;color:#3a3a3a;letter-spacing:-0.2px">&gt;</div>
<div style="position:absolute;left:657px;top:612px;width:17px;height:18px;background:linear-gradient(#f3f3f3,#dadada);border:1px solid #707070;border-radius:3px;"></div>
<div style="position:absolute;left:657px;top:616px;width:17px;text-align:center;font:12px/12px 'Liberation Sans',sans-serif;color:#3a3a3a;letter-spacing:-0.2px">&gt;&gt;</div>
<div style="position:absolute;left:596px;top:616px;white-space:nowrap;font:normal 12px/12px 'Liberation Sans',sans-serif;color:#000;letter-spacing:0.000px;transform:scaleX(0.8813);transform-origin:0 0;">0 to 0 of 0</div>
</body></html>
